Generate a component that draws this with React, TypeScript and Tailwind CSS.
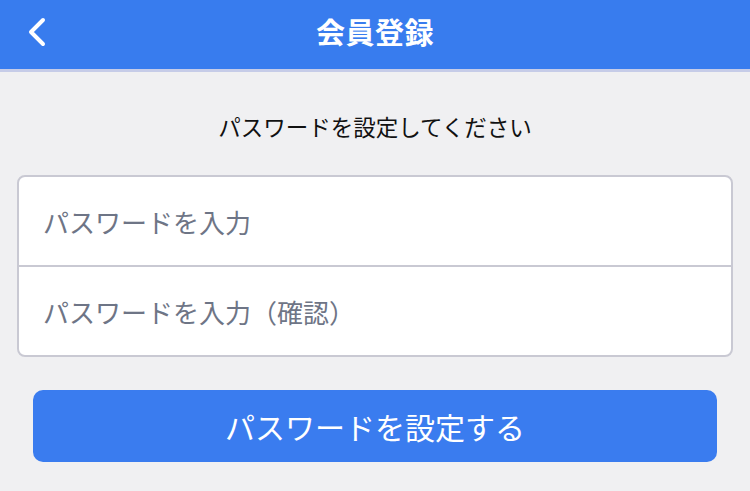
import React from 'react';

const font = { fontFamily: '"Noto Sans CJK JP", "Noto Sans", sans-serif' };

const App: React.FC = () => {
  return (
    <div className="w-[750px] h-[491px] bg-[#f0f0f2] flex flex-col" style={font}>
      <header className="relative h-[72px] bg-[#387cee] border-b-[3px] border-[#c6cce8] flex items-center justify-center shrink-0">
        <button className="absolute left-[24px] top-[14px] w-[26px] h-[36px] flex items-center justify-center text-white">
          <svg width="22" height="32" viewBox="0 0 22 32" fill="none">
            <path d="M17 4 L5 16 L17 28" stroke="white" strokeWidth="4" strokeLinecap="round" strokeLinejoin="round" />
          </svg>
        </button>
        <h1 className="text-white text-[29px] font-bold leading-none tracking-[0.5px] -mt-[6px]">会員登録</h1>
      </header>

      <div className="flex flex-col items-center pt-[39px]">
        <p className="text-[22.5px] leading-[30px] text-[#111111]">パスワードを設定してください</p>
      </div>

      <div className="mx-[17px] mt-[34px] bg-white border-2 border-[#c9c9d3] rounded-[8px] flex flex-col">
        <div className="h-[90px] flex items-center px-[24px] border-b-2 border-[#c9c9d3]">
          <span className="text-[26px] text-[#6e7586]">パスワードを入力</span>
        </div>
        <div className="h-[88px] flex items-center px-[24px]">
          <span className="text-[26px] text-[#6e7586]">パスワードを入力（確認）</span>
        </div>
      </div>

      <div className="px-[33px] mt-[33px]">
        <button className="w-full h-[72px] bg-[#3a7cef] rounded-[10px] flex items-center justify-center">
          <span className="text-white text-[30px] leading-none">パスワードを設定する</span>
        </button>
      </div>
    </div>
  );
};

export default App;
